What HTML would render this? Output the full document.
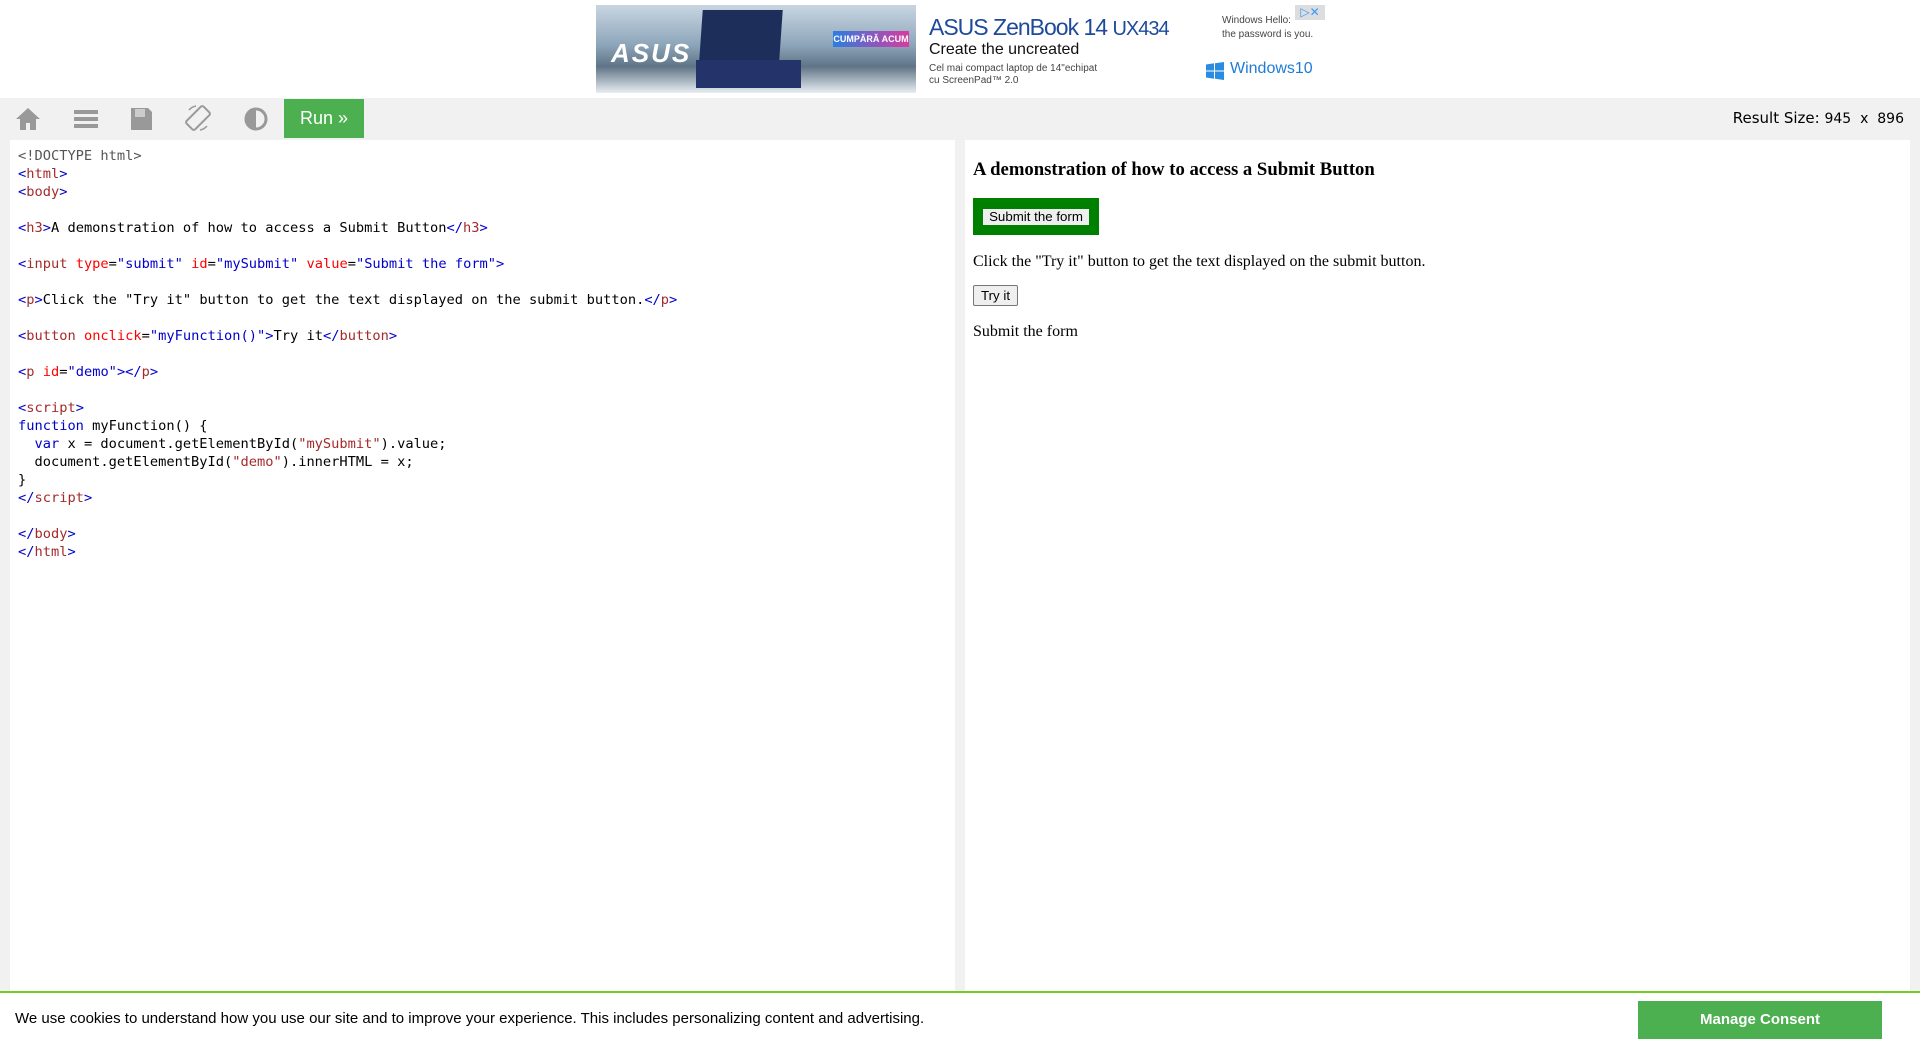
<!DOCTYPE html>
<html><head><meta charset="utf-8"><style>
*{margin:0;padding:0;box-sizing:border-box}
body{width:1920px;height:1045px;overflow:hidden;background:#f1f1f1;font-family:"Liberation Sans",sans-serif;position:relative}
#top{position:absolute;left:0;top:0;width:1920px;height:98px;background:#fff}
#ad{position:absolute;left:596px;top:5px;width:729px;height:88px;background:#fff;overflow:hidden}
#tb{position:absolute;left:0;top:98px;width:1920px;height:40px;background:#f1f1f1}
.ic{position:absolute;top:106px}
#run{position:absolute;left:284px;top:99px;width:80px;height:39px;background:#4caf50;color:#fff;font-size:18px;line-height:39px;text-align:center}
#rs{position:absolute;right:16px;top:109px;font-family:"DejaVu Sans",sans-serif;font-size:15px;color:#000}
#ed{position:absolute;left:10px;top:140px;width:945px;height:852px;background:#fff}
#ed pre{position:absolute;left:8px;top:7px;font-family:"DejaVu Sans Mono","Liberation Mono",monospace;font-size:13.7px;line-height:18px;color:#000}
.t{color:#0000cd}.n{color:#a52a2a}.a{color:red}.v{color:#0000cd}.g{color:#555}.k{color:#0000cd}.s{color:#a52a2a}
#res{position:absolute;left:965px;top:140px;width:945px;height:852px;background:#fff;font-family:"Liberation Serif",serif;color:#000}
#cb{position:absolute;left:0;top:991px;width:1920px;height:54px;background:#fff;border-top:2px solid #6fcf1f}
</style></head><body>
<div id="top"><div id="ad">
<div style="position:absolute;left:0;top:0;width:320px;height:88px;background:linear-gradient(180deg,#c9d6e2 0%,#8ea6ba 45%,#5f7486 70%,#e8edf2 100%)"></div>
<div style="position:absolute;left:15px;top:33px;color:#fff;font:italic bold 26px 'Liberation Sans';letter-spacing:2px">ASUS</div>
<div style="position:absolute;left:105px;top:5px;width:80px;height:50px;background:#1e2e5a;transform:skewX(-4deg)"></div>
<div style="position:absolute;left:100px;top:55px;width:105px;height:28px;background:#24336a"></div>
<div style="position:absolute;left:237px;top:26px;width:76px;height:16px;background:linear-gradient(90deg,#2c7de0,#d93aa0);color:#fff;font:bold 9px 'Liberation Sans';text-align:center;line-height:16px;white-space:nowrap">CUMPĂRĂ ACUM</div>
<div style="position:absolute;left:333px;top:9px;color:#1d4a9a;font-size:23px;letter-spacing:-1px;white-space:nowrap">ASUS ZenBook 14 <span style="font-size:20px">UX434</span></div>
<div style="position:absolute;left:333px;top:36px;font-size:16px;color:#111">Create the uncreated</div>
<div style="position:absolute;left:333px;top:58px;font-size:10px;color:#444;line-height:12px">Cel mai compact laptop de 14"echipat<br>cu ScreenPad™ 2.0</div>
<div style="position:absolute;left:626px;top:9px;font-size:10px;color:#444;line-height:14px">Windows Hello:<br>the password is you.</div>
<svg style="position:absolute;left:610px;top:57px" width="18" height="18" viewBox="0 0 18 18"><path d="M0 2.5 L8 1.3 V8.5 H0 Z M9 1.2 L18 0 V8.5 H9 Z M0 9.5 H8 V16.7 L0 15.5 Z M9 9.5 H18 V18 L9 16.8 Z" fill="#2a8ce0"/></svg>
<div style="position:absolute;left:634px;top:55px;font-size:16px;color:#1e7cd6">Windows10</div>
<div style="position:absolute;left:699px;top:0;width:30px;height:15px;background:#ddd;color:#39f;font-size:12px;line-height:15px;text-align:center">▷✕</div>
</div></div>
<div id="tb"></div>
<svg class="ic" style="left:14px" width="28" height="26" viewBox="0 0 28 26"><path d="M14 2 L2 13 H6 V24 H12 V17 H16 V24 H22 V13 H26 Z" fill="#999"/></svg>
<svg class="ic" style="left:73px" width="26" height="26" viewBox="0 0 26 26"><rect x="1" y="4" width="24" height="4" fill="#999"/><rect x="1" y="11" width="24" height="4" fill="#999"/><rect x="1" y="18" width="24" height="4" fill="#999"/></svg>
<svg class="ic" style="left:129px" width="24" height="26" viewBox="0 0 24 26"><path d="M2 2 H19 L23 6 V24 H2 Z" fill="#999"/><rect x="6" y="3" width="10" height="8" fill="#ccc"/></svg>
<svg class="ic" style="left:183px;top:103px" width="30" height="30" viewBox="0 0 30 30"><g transform="rotate(45 15 15)"><rect x="9" y="3" width="12" height="24" rx="2" fill="none" stroke="#999" stroke-width="2"/></g><path d="M6 7 A12 12 0 0 1 13 3" fill="none" stroke="#999" stroke-width="1.5"/><path d="M24 23 A12 12 0 0 1 17 27" fill="none" stroke="#999" stroke-width="1.5"/></svg>
<svg class="ic" style="left:243px" width="26" height="26" viewBox="0 0 26 26"><circle cx="13" cy="13" r="10" fill="none" stroke="#999" stroke-width="3"/><path d="M13 3 A10 10 0 0 0 13 23 Z" fill="#999"/></svg>
<div id="run">Run »</div>
<div id="rs">Result Size: <span style="font-size:14px">945 &nbsp;x&nbsp; 896</span></div>
<div id="ed"><pre><span class="g">&lt;!DOCTYPE html&gt;</span>
<span class="t">&lt;</span><span class="n">html</span><span class="t">&gt;</span>
<span class="t">&lt;</span><span class="n">body</span><span class="t">&gt;</span>

<span class="t">&lt;</span><span class="n">h3</span><span class="t">&gt;</span>A demonstration of how to access a Submit Button<span class="t">&lt;/</span><span class="n">h3</span><span class="t">&gt;</span>

<span class="t">&lt;</span><span class="n">input</span> <span class="a">type</span>=<span class="v">"submit"</span> <span class="a">id</span>=<span class="v">"mySubmit"</span> <span class="a">value</span>=<span class="v">"Submit the form"</span><span class="t">&gt;</span>

<span class="t">&lt;</span><span class="n">p</span><span class="t">&gt;</span>Click the "Try it" button to get the text displayed on the submit button.<span class="t">&lt;/</span><span class="n">p</span><span class="t">&gt;</span>

<span class="t">&lt;</span><span class="n">button</span> <span class="a">onclick</span>=<span class="v">"myFunction()"</span><span class="t">&gt;</span>Try it<span class="t">&lt;/</span><span class="n">button</span><span class="t">&gt;</span>

<span class="t">&lt;</span><span class="n">p</span> <span class="a">id</span>=<span class="v">"demo"</span><span class="t">&gt;&lt;/</span><span class="n">p</span><span class="t">&gt;</span>

<span class="t">&lt;</span><span class="n">script</span><span class="t">&gt;</span>
<span class="k">function</span> myFunction() {
  <span class="k">var</span> x = document.getElementById(<span class="s">"mySubmit"</span>).value;
  document.getElementById(<span class="s">"demo"</span>).innerHTML = x;
}
<span class="t">&lt;/</span><span class="n">script</span><span class="t">&gt;</span>

<span class="t">&lt;/</span><span class="n">body</span><span class="t">&gt;</span>
<span class="t">&lt;/</span><span class="n">html</span><span class="t">&gt;</span></pre></div>
<div id="res">
<div style="position:absolute;left:8px;top:19px;font-weight:bold;font-size:18.7px">A demonstration of how to access a Submit Button</div>
<div style="position:absolute;left:8px;top:58px;width:126px;height:37px;background:#008000"></div>
<div style="position:absolute;left:18px;top:69px;width:106px;height:16px;background:#efefef;font:13.3px 'Liberation Sans';line-height:16px;text-align:center">Submit the form</div>
<div style="position:absolute;left:8px;top:113px;font-size:16px">Click the "Try it" button to get the text displayed on the submit button.</div>
<div style="position:absolute;left:8px;top:145px;width:45px;height:21px;background:#efefef;border:1px solid #767676;border-radius:2px;font:13.3px 'Liberation Sans';line-height:19px;text-align:center">Try it</div>
<div style="position:absolute;left:8px;top:183px;font-size:16px">Submit the form</div>
</div>
<div id="cb">
<div style="position:absolute;left:15px;top:17px;font-size:15px;color:#000">We use cookies to understand how you use our site and to improve your experience. This includes personalizing content and advertising.</div>
<div style="position:absolute;left:1638px;top:8px;width:244px;height:38px;background:#4caf50;color:#fff;font-weight:bold;font-size:15px;line-height:38px;text-align:center">Manage Consent</div>
</div>
</body></html>
